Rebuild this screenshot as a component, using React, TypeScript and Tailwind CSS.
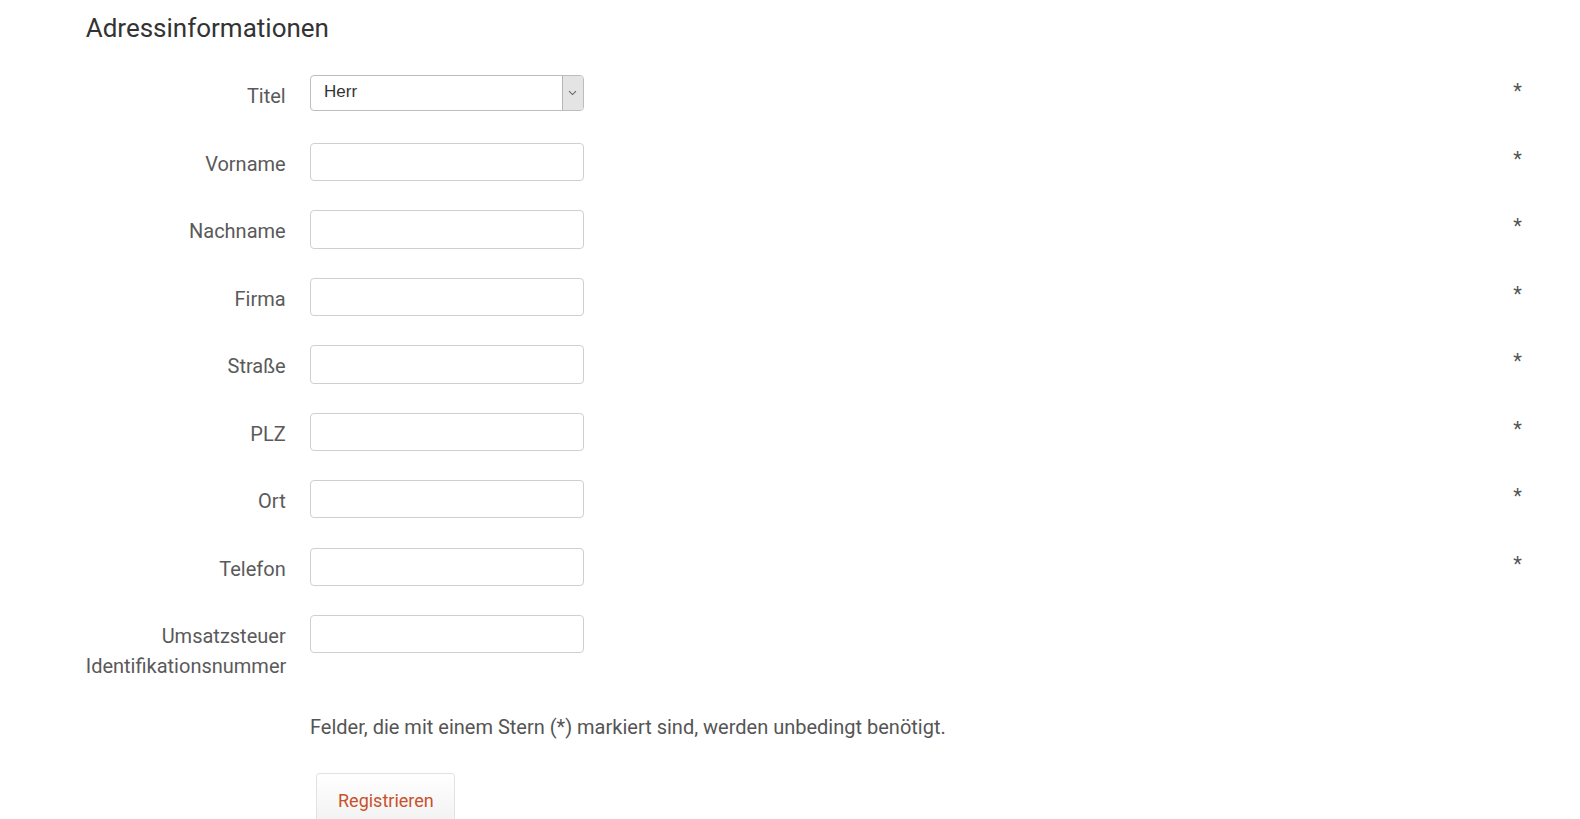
import React from "react";

type Field = { label: string[]; required: boolean; select?: string };

const fields: Field[] = [
  { label: ["Titel"], required: true, select: "Herr" },
  { label: ["Vorname"], required: true },
  { label: ["Nachname"], required: true },
  { label: ["Firma"], required: true },
  { label: ["Straße"], required: true },
  { label: ["PLZ"], required: true },
  { label: ["Ort"], required: true },
  { label: ["Telefon"], required: true },
  { label: ["Umsatzsteuer", "Identifikationsnummer"], required: false },
];

// Nachbau eines nativen Select-Feldes
const TitleSelect = ({ value }: { value: string }) => (
  <div className="flex h-[36px] w-[274px] items-stretch overflow-hidden rounded-[4px] border border-[#bdbdbd] bg-white">
    <div className="flex-1 pl-[13px] pt-[6px] font-['Liberation_Sans',Arial,sans-serif] text-[17px] leading-[20px] text-[#333]">
      {value}
    </div>
    <div className="flex w-[21px] items-center justify-center border-l border-[#b5b5b5] bg-[#e4e4e4]">
      <svg width="9" height="6" viewBox="0 0 9 6" fill="none">
        <path d="M1 1.2 L4.5 4.6 L8 1.2" stroke="#666" strokeWidth="1.1" />
      </svg>
    </div>
  </div>
);

const App = () => {
  return (
    <main className="min-h-screen bg-white pl-[85.7px] pr-[52.4px] pt-[10.2px] font-['Roboto',sans-serif]">
      <h1 className="mb-[29px] text-[26px] font-normal leading-[36px] text-[#333]">
        Adressinformationen
      </h1>

      <form className="flex flex-col gap-[29.1px]">
        {fields.map((field) => (
          <div key={field.label.join(" ")} className="flex items-start">
            <label className="w-[200px] shrink-0 pt-[6.2px] text-right text-[20px] leading-[30px] text-[#5a5a5a]">
              {field.label.map((line) => (
                <span key={line} className="block">
                  {line}
                </span>
              ))}
            </label>
            <div className="ml-[24.3px] h-[38.4px]">
              {field.select ? (
                <TitleSelect value={field.select} />
              ) : (
                <input
                  type="text"
                  className="h-[38.4px] w-[274px] rounded-[4px] border border-[#cfcfcf] bg-white px-3 text-[17px] outline-none"
                />
              )}
            </div>
            <div className="ml-auto w-[20px] pt-[6px] text-center text-[20px] leading-[20px] text-[#555]">
              {field.required ? "*" : ""}
            </div>
          </div>
        ))}
      </form>

      <p className="ml-[224.3px] mt-[31px] text-[20px] leading-[30px] text-[#555]">
        Felder, die mit einem Stern (*) markiert sind, werden unbedingt benötigt.
      </p>

      <div className="ml-[230.7px] mt-[31px]">
        <button
          type="button"
          className="h-[54px] w-[139px] rounded-[3px] border border-[#e2e2e2] bg-gradient-to-b from-white to-[#f1f1f1] text-[18px] text-[#c8512b]"
        >
          Registrieren
        </button>
      </div>
    </main>
  );
};

export default App;
